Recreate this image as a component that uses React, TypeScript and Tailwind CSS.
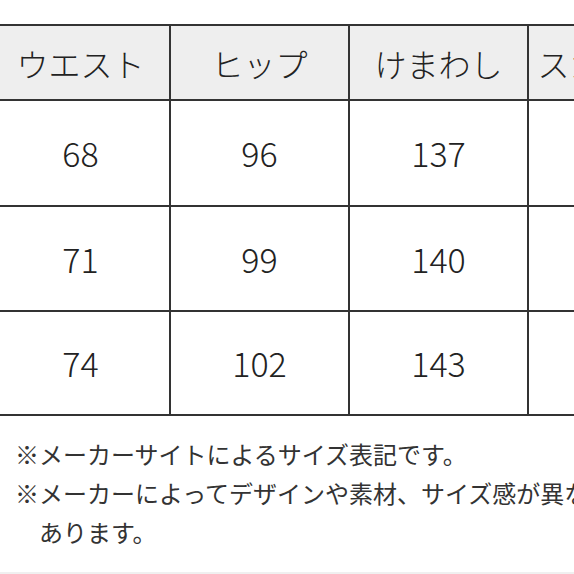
const headers = ['ウエスト', 'ヒップ', 'けまわし', 'スカート丈'];

const rows = [
  { h: 'h-[106px]', v: ['68', '96', '137', ''] },
  { h: 'h-[105px]', v: ['71', '99', '140', ''] },
  { h: 'h-[104px]', v: ['74', '102', '143', ''] },
];

export default function App() {
  return (
    <div
      className="flex flex-col w-[574px] h-[574px] overflow-hidden bg-white text-[#222]"
      style={{ fontFamily: '"Noto Sans CJK JP", "Noto Sans", sans-serif' }}
    >
      <div className="pt-[24px] ml-[-10px]">
        <table className="table-fixed border-collapse w-[718px]">
          <thead>
            <tr className="h-[75px] bg-[#eeeeee]">
              {headers.map((t) => (
                <th
                  key={t}
                  className="w-[179px] border-2 border-[#333] text-[32px] font-light leading-none text-center whitespace-nowrap"
                >
                  {t}
                </th>
              ))}
            </tr>
          </thead>
          <tbody>
            {rows.map((r, i) => (
              <tr key={i} className={r.h}>
                {r.v.map((n, j) => (
                  <td
                    key={j}
                    className="border-2 border-[#333] text-[34px] font-light leading-none text-center"
                  >
                    {n}
                  </td>
                ))}
              </tr>
            ))}
          </tbody>
        </table>
      </div>

      <div className="pt-[18px] pl-[15px] text-[24px] leading-[39px] text-[#333] whitespace-nowrap">
        <p>※メーカーサイトによるサイズ表記です。</p>
        <p>※メーカーによってデザインや素材、サイズ感が異な</p>
        <p className="pl-[24px]">あります。</p>
      </div>

      <div className="mt-auto h-[2px] bg-[#f0f0f0]" />
    </div>
  );
}
